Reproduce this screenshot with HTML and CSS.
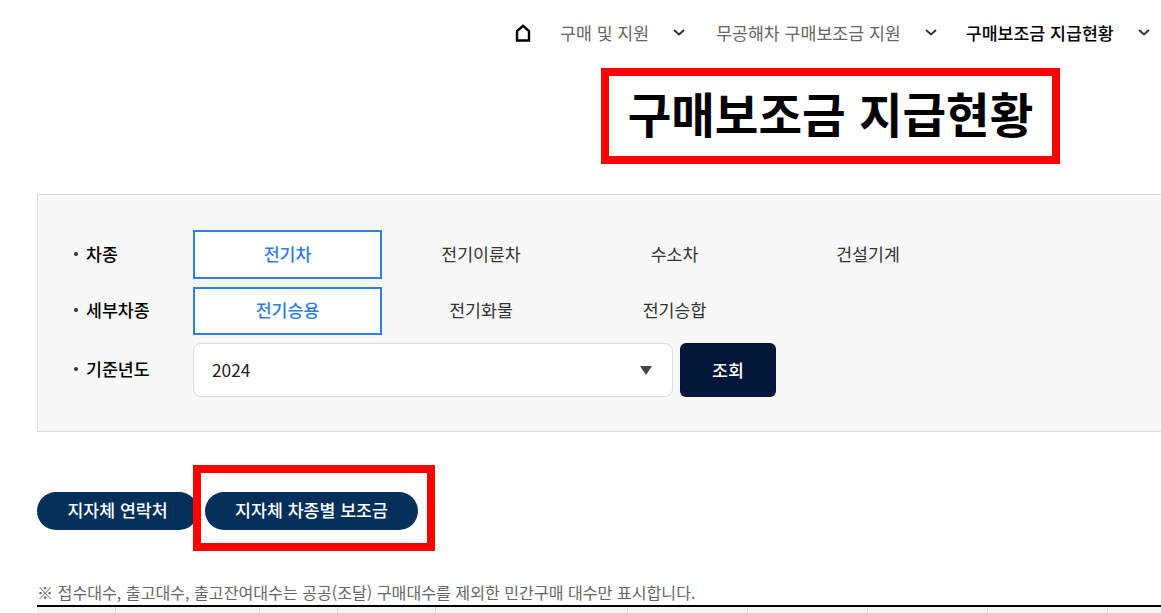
FILE: index.html
```html
<!DOCTYPE html>
<html lang="ko">
<head>
<meta charset="utf-8">
<title>구매보조금 지급현황</title>
<link rel="stylesheet" href="styles.css">
</head>
<body>
<nav class="crumbs">
  <svg class="home" width="16" height="18" viewBox="0 0 16 18"><path d="M2 16.5V7L8 1.8 14 7v9.5z" fill="none" stroke="#000" stroke-width="2.4"/></svg>
  <span class="crumb first">구매 및 지원</span>
  <svg class="chev" width="12" height="7" viewBox="0 0 12 7"><path d="M1 1l5 4.5L11 1" fill="none" stroke="#333" stroke-width="2"/></svg>
  <span class="crumb">무공해차 구매보조금 지원</span>
  <svg class="chev mid" width="12" height="7" viewBox="0 0 12 7"><path d="M1 1l5 4.5L11 1" fill="none" stroke="#333" stroke-width="2"/></svg>
  <span class="crumb current">구매보조금 지급현황</span>
  <svg class="chev end" width="12" height="7" viewBox="0 0 12 7"><path d="M1 1l5 4.5L11 1" fill="none" stroke="#333" stroke-width="2"/></svg>
</nav>
<div class="title-wrap"><h1 class="title">구매보조금 지급현황</h1></div>
<section class="filter">
  <div class="row">
    <span class="label">차종</span>
    <button class="opt on">전기차</button>
    <button class="opt">전기이륜차</button>
    <button class="opt">수소차</button>
    <button class="opt">건설기계</button>
  </div>
  <div class="row">
    <span class="label">세부차종</span>
    <button class="opt on">전기승용</button>
    <button class="opt">전기화물</button>
    <button class="opt">전기승합</button>
  </div>
  <div class="row">
    <span class="label">기준년도</span>
    <div class="select">2024<i class="caret"></i></div>
    <button class="search">조회</button>
  </div>
</section>
<div class="pills">
  <button class="pill">지자체 연락처</button>
  <div class="mark"><button class="pill">지자체 차종별 보조금</button></div>
</div>
<p class="note">※ 접수대수, 출고대수, 출고잔여대수는 공공(조달) 구매대수를 제외한 민간구매 대수만 표시합니다.</p>
<div class="thead">
  <div class="th w79"></div><div class="th w144"></div><div class="th w78"></div><div class="th w98"></div><div class="th w192"></div><div class="th w120"></div><div class="th w120"></div><div class="th w120"></div><div class="th w120"></div><div class="th"></div>
</div>
</body>
</html>
```
FILE: styles.css
```css
* { box-sizing: border-box; }
html, body { margin: 0; width: 1161px; height: 613px; overflow: hidden; }
body { background: #fff; font-family: "Noto Sans CJK KR", "Noto Sans", sans-serif; color: #000; }
button { font: inherit; border: 0; background: none; padding: 0; color: inherit; }
.crumbs { height: 66px; display: flex; align-items: center; padding: 0 0 1px 515px; font-size: 17.3px; }
.home { flex: none; }
.crumb { color: #666; white-space: nowrap; }
.crumb.first { margin-left: 29px; }
.crumb.current { color: #000; font-weight: 500; }
.chev { margin: 0 31px 0 24px; flex: none; }
.chev.mid { margin-right: 29px; }
.chev.end { margin-right: 0; }
.title-wrap { display: flex; padding-left: 601px; height: 128px; }
.title { margin: 2px 0 0; width: 459px; height: 96px; border: 8px solid #f00; font-size: 47.4px; font-weight: 700; line-height: 73px; text-align: center; white-space: nowrap; }
.filter { margin-left: 37px; height: 238px; background: #f8f8f8; border: 1px solid #ddd; border-right: 0; padding: 35px 0 0 35px; }
.row { display: flex; align-items: center; margin-bottom: 8px; height: 49px; }
.row:nth-child(2) { height: 48px; }
.row:nth-child(3) { height: 54px; }
.label { width: 120px; padding: 0 0 3px 13px; position: relative; font-size: 17.3px; font-weight: 500; }
.label::before { content: ""; position: absolute; left: 1px; top: 50%; width: 4px; height: 4px; margin-top: -3px; border-radius: 50%; background: #333; }
.opt { width: 189px; height: 100%; margin-right: 4.5px; padding-bottom: 3px; font-size: 17.3px; color: #333; }
.opt.on { color: #2f7de1; background: #fff; border: 2px solid #2f7de1; font-weight: 500; }
.select { width: 480px; height: 54px; background: #fff; border: 1px solid #ddd; border-radius: 8px; display: flex; align-items: center; justify-content: space-between; padding: 0 20px 2px 18px; font-size: 17.3px; color: #222; }
.caret { width: 0; height: 0; border: 6px solid transparent; border-top: 9px solid #444; border-bottom: 0; margin-top: 2px; }
.search { width: 96px; height: 54px; margin-left: 7px; padding-bottom: 2px; background: #011638; color: #fff; border-radius: 6px; font-size: 17.3px; font-weight: 500; }
.pills { display: flex; align-items: center; margin: 33px 0 0 37px; height: 86px; }
.pill { height: 38px; margin-top: 6px; padding-bottom: 3px; background: #03305a; color: #fff; border-radius: 19px; font-size: 17.3px; font-weight: 500; white-space: nowrap; width: 161px; flex: none; }
.mark { margin-left: -5px; width: 242px; height: 86px; border: 8px solid #f00; display: flex; align-items: center; padding-left: 4px; }
.mark .pill { width: 213px; }
.note { margin: 27px 0 0 37px; height: 27px; font-size: 16.1px; line-height: 29px; color: #666; white-space: nowrap; }
.thead { margin-left: 37px; height: 8px; display: flex; border-top: 2px solid #000; background: #f4f4f4; }
.th { border-right: 1px solid #ddd; flex: none; }
.th:last-child { flex: 1; border-right: 0; }
.w79 { width: 79px; }
.w144 { width: 144px; }
.w78 { width: 78px; }
.w98 { width: 98px; }
.w192 { width: 192px; }
.w120 { width: 120px; }
```
